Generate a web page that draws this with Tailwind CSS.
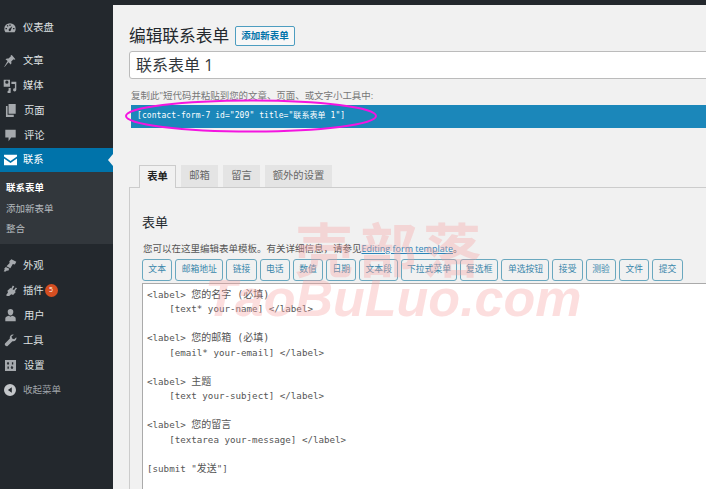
<!DOCTYPE html>
<html><head><meta charset="utf-8"><script src="https://cdn.jsdelivr.net/npm/@tailwindcss/browser@4"></script></head>
<body class="w-[706px] h-[489px] overflow-hidden bg-[#f1f1f1] font-['Open_Sans','Noto_Sans_CJK_SC',sans-serif] text-[#444]">
<div class="relative flex h-[489px] w-[706px] overflow-hidden">
<!-- sidebar -->
<aside class="w-[113px] shrink-0 h-full bg-[#23282d] text-[10.3px] text-[#dfe1e2] flex flex-col pt-[15px]">
  <a class="h-[25px] flex items-center gap-[7px] pl-[4px]"><svg class="w-[12px] h-[12px] fill-[#a5a9ad]" viewBox="0 0 20 20"><path fill-rule="evenodd" d="M10 2a9.500 9.500 0 0 0-9.500 9.500c0 2.200.7 4 1.900 5.500h15.200c1.200-1.500 1.900-3.300 1.900-5.500A9.500 9.500 0 0 0 10 2zM9 4h2v2.500H9zM4.500 6l1.600-1.200 1.500 2-1.600 1.200zM2.500 12v-2H5v2zm7.500 3.500a2.300 2.300 0 0 1-1.300-4.200l5-4.300-2.300 6.800a2.300 2.300 0 0 1-1.400 1.700zM15 12v-2h2.500v2z"/></svg><span>仪表盘</span></a>
  <div class="h-[8px]"></div>
  <a class="h-[25px] flex items-center gap-[7px] pl-[4px]"><svg class="w-[12px] h-[14px] fill-[#a5a9ad]" viewBox="0 0 20 22"><path d="M13 1l6 7-2 1-1-1-4 4c.8 2 .3 4-.8 5L7.500 13 1 21l-.5-.5L6 11 2.500 8c1.200-1.200 3-1.700 5-1l4-4-.5-1z"/></svg><span>文章</span></a>
  <a class="h-[25px] flex items-center gap-[6px] pl-[3px]"><svg class="w-[14px] h-[14px] fill-[#a5a9ad]" viewBox="0 0 20 20"><path fill-rule="evenodd" d="M1 1h9v10H1zm2.200 3.500a2.300 2.300 0 1 0 4.600 0 2.300 2.300 0 0 0-4.600 0zM12 4h7v11.500a2.300 2.300 0 1 1-2-2.300V7h-5zM8 13h3v5.500a2.300 2.300 0 1 1-3-2.200z"/></svg><span>媒体</span></a>
  <a class="h-[25px] flex items-center gap-[7px] pl-[5px]"><svg class="w-[11px] h-[13px] fill-[#a5a9ad]" viewBox="0 0 16 20"><path d="M5 0h11v15H5zM1 3h2.500v13.500H13V20H1z"/></svg><span class="ml-[1px]">页面</span></a>
  <a class="h-[25px] flex items-center gap-[7px] pl-[5px]"><svg class="w-[11px] h-[13px] fill-[#a5a9ad]" viewBox="0 0 16 20"><path d="M0 1h16v12H9l-4 6v-6H0z"/></svg><span class="ml-[1px]">评论</span></a>
  <a class="relative h-[24px] flex items-center gap-[6px] pl-[4px] bg-[#0073aa] text-white"><svg class="w-[13px] h-[12px] fill-white" viewBox="0 0 20 18"><path d="M0 1h20v2.500l-10 7-10-7zM0 6.500l10 7 10-7V17H0z"/></svg><span>联系</span><span class="absolute right-0 top-[6px] border-y-[6px] border-r-[5px] border-y-transparent border-r-[#f1f1f1]"></span></a>
  <div class="bg-[#32373c] pt-[6px] h-[72px] text-[9.5px] text-[#b4b9be]">
    <div class="h-[21px] pl-[6px] flex items-center font-bold text-white">联系表单</div>
    <div class="h-[20px] pl-[6px] flex items-center">添加新表单</div>
    <div class="h-[20px] pl-[6px] flex items-center">整合</div>
  </div>
  <div class="h-[9px]"></div>
  <a class="h-[25px] flex items-center gap-[6px] pl-[3px]"><svg class="w-[14px] h-[13px] fill-[#a5a9ad]" viewBox="0 0 20 18"><path d="M12 0l7 3.500-2 4-3-.5-3.500 6L5 10l4.500-4.500-.5-2.500zM4 11l5 2.500-1.500 3-2-.5-1.500 1.500H1l1.500-3-1-.5z"/></svg><span>外观</span></a>
  <a class="h-[25px] flex items-center pl-[5px]"><svg class="w-[12px] h-[12px] fill-[#a5a9ad]" viewBox="0 0 20 20"><path d="M13 1l2.500 1.500-3 4.500 2.500 1.500 3-4.500L20 5.500l-3.500 5 1.500 1-4.500 5-3-1-3.500 3H3l-1-2 3-4-1-3 5-4.500 1.500 1z"/></svg><span class="ml-[6px]">插件</span><span class="ml-[1px] w-[13px] h-[13px] rounded-full bg-[#d54e21] text-[7px] text-white flex items-center justify-center">5</span></a>
  <a class="h-[25px] flex items-center gap-[7px] pl-[5px]"><svg class="w-[11px] h-[13px] fill-[#a5a9ad]" viewBox="0 0 16 20"><path d="M8 0a4.300 4.300 0 0 1 4.300 4.500C12.300 7 10.300 10 8 10S3.700 7 3.700 4.500A4.300 4.300 0 0 1 8 0zM0 19v-4c0-2 1-3 3-3.700l2.500-.8a3.500 3.500 0 0 0 5 0l2.500.8c2 .7 3 1.700 3 3.700v4z"/></svg><span class="ml-[1px]">用户</span></a>
  <a class="h-[25px] flex items-center gap-[7px] pl-[4px]"><svg class="w-[13px] h-[13px] fill-[#a5a9ad]" viewBox="0 0 20 20"><path d="M19 5l-3.500 3-3-1-1-3L15 1c-3.500-1-7 2-6 6L1.500 14.500c-1.500 2 2 5.500 4 4L13 11c4 1 7-2.500 6-6z"/></svg><span class="ml-[-1px]">工具</span></a>
  <a class="h-[25px] flex items-center gap-[7px] pl-[5px]"><svg class="w-[11px] h-[11px] fill-[#a5a9ad]" viewBox="0 0 20 20"><path fill-rule="evenodd" d="M0 0h20v20H0zm4 4v2.500H3L5.500 9 8 6.500H7V4zm.5 8v4H7v-4zm8-8v4H15V4zM10 14h1.500v2.500H14V14h1.500l-3-3.500z"/></svg><span class="ml-[1px]">设置</span></a>
  <a class="h-[24px] flex items-center gap-[7px] pl-[4px] text-[9.5px] text-[#a0a5aa]"><svg class="w-[12px] h-[12px] fill-[#c4c7ca]" viewBox="0 0 20 20"><path fill-rule="evenodd" d="M10 0a10 10 0 1 1 0 20 10 10 0 0 1 0-20zm3 5.500L6.500 10l6.500 4.500z"/></svg><span>收起菜单</span></a>
</aside>
<!-- main -->
<main class="flex-1 min-w-0 flex flex-col">
  <div class="h-[5px] bg-[#23282d] shrink-0"></div>
  <div class="pl-[16px] flex-1 min-h-0">
    <div class="flex items-center pt-[16px] h-[46px]">
      <h1 class="text-[16.7px] leading-[20px] text-[#23282d]">编辑联系表单</h1>
      <button class="ml-[6px] h-[20px] w-[60px] border border-[#4d9dc0] rounded-[2px] bg-[#f7f7f7] text-[9.5px] leading-[18px] text-[#0073aa] font-semibold">添加新表单</button>
    </div>
    <div class="h-[28px] w-[600px] bg-white border border-[#bbb] rounded-[3px] pl-[6px] text-[16px] leading-[26px] text-[#32373c]">联系表单 1</div>
    <p class="mt-[10px] text-[9.45px] leading-[14px] pl-[2px] text-[#777]">复制此"短代码并粘贴到您的文章、页面、或文字小工具中:</p>
    <div class="mt-[2px] h-[23px] ml-[2px] bg-[#1b87ba] font-['DejaVu_Sans_Mono','Noto_Sans_CJK_SC',monospace] text-[8px] tracking-[0.07px] leading-[22px] pl-[6px] text-white">[contact-form-7 id="209" title="联系表单 1"]</div>
    <div class="mt-[37px] flex pl-[10px] gap-[5px] h-[23px] text-[10.3px] relative z-10">
      <span class="h-[23px] w-[37px] border border-[#ccc] border-b-0 bg-[#f1f1f1] font-bold text-[#222] flex items-center justify-center">表单</span>
      <span class="h-[22px] w-[37px] bg-[#e4e4e4] text-[#666] flex items-center justify-center">邮箱</span>
      <span class="h-[22px] w-[37px] bg-[#e4e4e4] text-[#666] flex items-center justify-center">留言</span>
      <span class="h-[22px] w-[67px] bg-[#e4e4e4] text-[#666] flex items-center justify-center">额外的设置</span>
    </div>
    <section class="mt-[-1px] border-l border-t border-[#ccc] h-[400px] pl-[12px] pt-[25px]">
      <h2 class="text-[13px] leading-[18px] text-[#23282d]">表单</h2>
      <p class="mt-[11px] text-[9.5px] leading-[14px] pl-[1px] text-[#555]">您可以在这里编辑表单模板。有关详细信息，请参见<a class="text-[9px] text-[#2a84b8] underline">Editing form template</a>。</p>
      <div class="mt-[3px] flex gap-[3px] text-[8.8px] text-[#3a87ab]">
        <span class="h-[22px] w-[30.3px] border-[1.5px] border-[#6aa8bf] rounded-[3px] flex items-center justify-center">文本</span>
        <span class="h-[22px] w-[48px] border-[1.5px] border-[#6aa8bf] rounded-[3px] flex items-center justify-center">邮箱地址</span>
        <span class="h-[22px] w-[30.3px] border-[1.5px] border-[#6aa8bf] rounded-[3px] flex items-center justify-center">链接</span>
        <span class="h-[22px] w-[30.3px] border-[1.5px] border-[#6aa8bf] rounded-[3px] flex items-center justify-center">电话</span>
        <span class="h-[22px] w-[30.3px] border-[1.5px] border-[#6aa8bf] rounded-[3px] flex items-center justify-center">数值</span>
        <span class="h-[22px] w-[30.3px] border-[1.5px] border-[#6aa8bf] rounded-[3px] flex items-center justify-center">日期</span>
        <span class="h-[22px] w-[38.5px] border-[1.5px] border-[#6aa8bf] rounded-[3px] flex items-center justify-center">文本段</span>
        <span class="h-[22px] w-[56px] border-[1.5px] border-[#6aa8bf] rounded-[3px] flex items-center justify-center">下拉式菜单</span>
        <span class="h-[22px] w-[38.5px] border-[1.5px] border-[#6aa8bf] rounded-[3px] flex items-center justify-center">复选框</span>
        <span class="h-[22px] w-[48px] border-[1.5px] border-[#6aa8bf] rounded-[3px] flex items-center justify-center">单选按钮</span>
        <span class="h-[22px] w-[30.3px] border-[1.5px] border-[#6aa8bf] rounded-[3px] flex items-center justify-center">接受</span>
        <span class="h-[22px] w-[30.3px] border-[1.5px] border-[#6aa8bf] rounded-[3px] flex items-center justify-center">测验</span>
        <span class="h-[22px] w-[30.3px] border-[1.5px] border-[#6aa8bf] rounded-[3px] flex items-center justify-center">文件</span>
        <span class="h-[22px] w-[30.3px] border-[1.5px] border-[#6aa8bf] rounded-[3px] flex items-center justify-center">提交</span>
      </div>
      <pre class="mt-[2px] w-[600px] h-[220px] bg-white border border-[#aaa] pl-[4px] pt-[3.500px] font-['DejaVu_Sans_Mono','Noto_Sans_CJK_SC',monospace] text-[9.2px] leading-[14.5px] text-[#555]">&lt;label&gt; <span class="text-[10px] leading-[14px]">您的名字 (必填)</span>
    [text* your-name] &lt;/label&gt;

&lt;label&gt; <span class="text-[10px] leading-[14px]">您的邮箱 (必填)</span>
    [email* your-email] &lt;/label&gt;

&lt;label&gt; <span class="text-[10px] leading-[14px]">主题</span>
    [text your-subject] &lt;/label&gt;

&lt;label&gt; <span class="text-[10px] leading-[14px]">您的留言</span>
    [textarea your-message] &lt;/label&gt;

[submit "<span class="text-[10px] leading-[14px]">发送</span>"]</pre>
    </section>
  </div>
</main>
<!-- overlays -->
<svg class="absolute left-[124px] top-[98px] pointer-events-none" width="256" height="36" viewBox="0 0 256 36"><ellipse cx="127" cy="18" rx="125" ry="15.500" fill="none" stroke="#f414e0" stroke-width="2"/></svg>
<div class="absolute left-[295px] top-[218px] text-[58px] leading-[64px] font-bold tracking-[6px] whitespace-nowrap text-[#f5a0a0]/35 pointer-events-none">壳部落</div>
<div class="absolute left-[205px] top-[268px] text-[52px] leading-[60px] italic font-bold whitespace-nowrap text-[#f5a0a0]/35 pointer-events-none font-['Liberation_Sans',sans-serif]">TaoBuLuo.com</div>
</div>
</body></html>
